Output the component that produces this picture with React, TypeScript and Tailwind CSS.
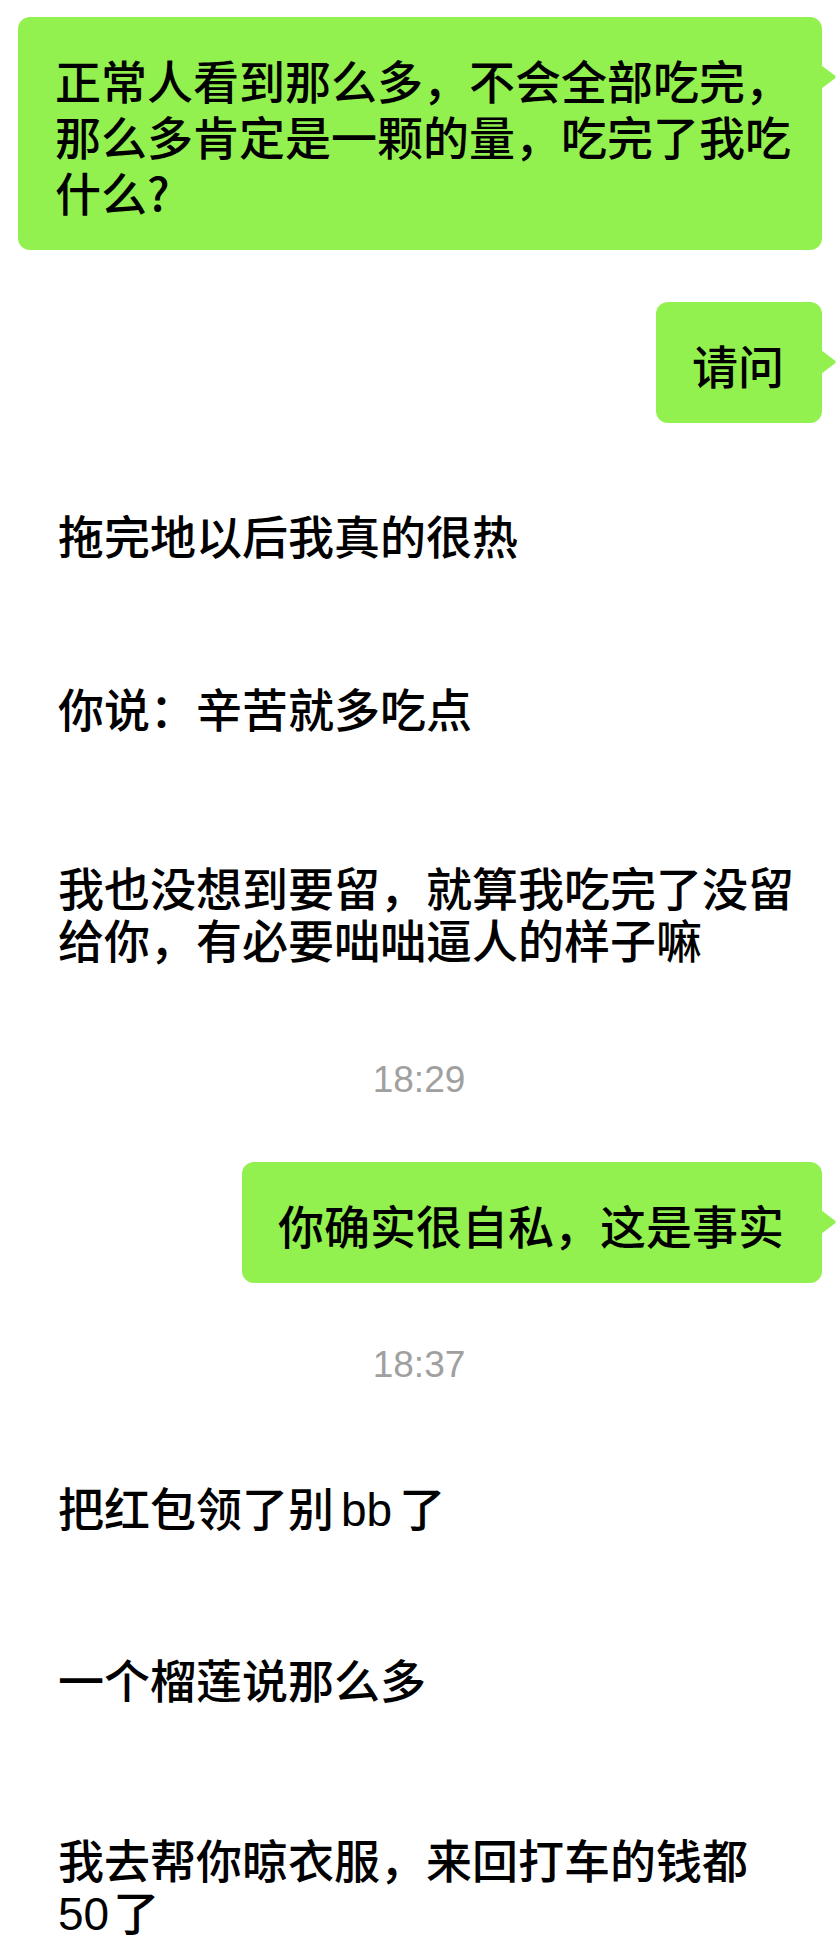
import type { ReactNode } from "react";

const GREEN = "#92f14f";

function Tail() {
  return (
    <svg
      className="absolute right-[-15px] top-[48px]"
      width="16"
      height="24"
      viewBox="0 0 16 24"
    >
      <path d="M0 0 L13.5 10.2 Q15.8 12 13.5 13.8 L0 24 Z" fill={GREEN} />
    </svg>
  );
}

// outgoing green bubble, lines are broken by hand so the wrap matches
function OutBubble({ lines, className = "" }: { lines: ReactNode[]; className?: string }) {
  return (
    <div className={`flex justify-end pr-[16px] ${className}`}>
      <div className="relative rounded-[12px] bg-[#92f14f] pl-[36px] pr-[38px] pt-[34px] pb-[31px] text-[46px] leading-[56px] text-black">
        {lines.map((l, i) => (
          <div key={i} className="whitespace-nowrap">
            {l}
          </div>
        ))}
        <Tail />
      </div>
    </div>
  );
}

// incoming message: white bubble on white page, only the text shows
function InText({ lines, className = "" }: { lines: ReactNode[]; className?: string }) {
  return (
    <div className={`pl-[58px] pt-[34px] pb-[31px] text-[46px] leading-[52px] text-black ${className}`}>
      {lines.map((l, i) => (
        <div key={i} className="whitespace-nowrap">
          {l}
        </div>
      ))}
    </div>
  );
}

function Time({ text, className = "" }: { text: string; className?: string }) {
  return (
    <div
      className={`text-center font-['Liberation_Sans',sans-serif] text-[37px] leading-[40px] text-[#a0a0a0] ${className}`}
    >
      {text}
    </div>
  );
}

export default function App() {
  return (
    <div className="h-[1952px] w-[838px] overflow-hidden bg-white pt-[17px] font-['Noto_Sans_CJK_SC','Noto_Sans',sans-serif] font-medium">
      <div className="pl-[18px]">
        <div className="relative w-[804px] rounded-[12px] bg-[#92f14f] pl-[37px] pt-[34px] pb-[31px] text-[46px] leading-[56px] text-black">
          <div className="whitespace-nowrap">正常人看到那么多，不会全部吃完，</div>
          <div className="whitespace-nowrap">那么多肯定是一颗的量，吃完了我吃</div>
          <div className="whitespace-nowrap">什么?</div>
          <Tail />
        </div>
      </div>

      <OutBubble className="mt-[52px]" lines={["请问"]} />

      <InText className="mt-[51px]" lines={["拖完地以后我真的很热"]} />

      <InText className="mt-[56px]" lines={["你说：辛苦就多吃点"]} />

      <InText
        className="mt-[62px]"
        lines={["我也没想到要留，就算我吃完了没留", "给你，有必要咄咄逼人的样子嘛"]}
      />

      <Time className="mt-[65px] font-normal" text="18:29" />

      <OutBubble className="mt-[62px]" lines={["你确实很自私，这是事实"]} />

      <Time className="mt-[62px] font-normal" text="18:37" />

      <InText
        className="mt-[61px]"
        lines={[
          <>
            把红包领了别
            <span className="mx-[7px] font-['Liberation_Sans'] font-normal leading-none">bb</span>了
          </>,
        ]}
      />

      <InText className="mt-[54px]" lines={["一个榴莲说那么多"]} />

      <InText
        className="mt-[63px]"
        lines={[
          "我去帮你晾衣服，来回打车的钱都",
          <>
            <span className="mr-[4px] font-['Liberation_Sans'] font-normal leading-none">50</span>了
          </>,
        ]}
      />
    </div>
  );
}
